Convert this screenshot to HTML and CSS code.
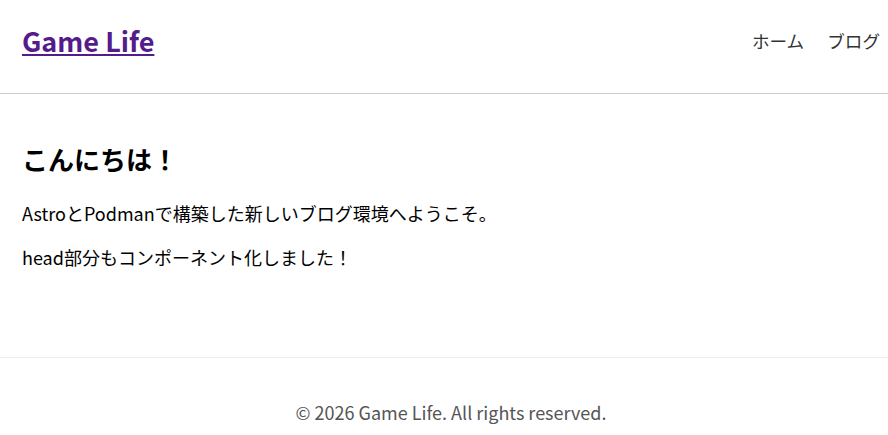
FILE: index.html
```html
<!DOCTYPE html>
<html lang="ja">
<head>
    <meta charset="UTF-8">
    <meta name="viewport" content="width=device-width, initial-scale=1.0">
    <title>Game Life</title>
    <link rel="stylesheet" href="styles.css">
</head>
<body>
<header class="site-header">
    <a class="logo" href="#">Game Life</a>
    <nav class="nav">
        <a href="#">ホーム</a>
        <a href="#">ブログ</a>
    </nav>
</header>

<main class="content">
    <h1>こんにちは！</h1>
    <p>AstroとPodmanで構築した新しいブログ環境へようこそ。</p>
    <p>head部分もコンポーネント化しました！</p>
</main>

<footer class="site-footer">
    <p>&copy; 2026 Game Life. All rights reserved.</p>
</footer>
</body>
</html>
```

FILE: styles.css
```css
body {
    margin: 0;
    font-family: "Noto Sans CJK JP", sans-serif;
    color: #000;
    background: #fff;
}

.site-header {
    display: flex;
    justify-content: space-between;
    align-items: center;
    height: 80px;
    padding: 0 8px 13px 22px;
    border-bottom: 1px solid #ccc;
}

.logo {
    font-size: 27px;
    font-weight: bold;
    color: #551a8b;
}

.nav {
    display: flex;
    gap: 23px;
}

.nav a {
    color: #333;
    text-decoration: none;
    font-size: 17.6px;
}

.content {
    padding: 46px 22px 87px;
}

.content h1 {
    font-size: 26px;
    margin: 0 0 23px;
}

.content p {
    font-size: 18px;
    margin: 0 0 18px;
}

.content p:last-child {
    margin-bottom: 0;
}

.site-footer {
    border-top: 1px solid #eee;
    text-align: center;
    padding: 41px 0 0 14px;
    color: #555;
    font-size: 18px;
}

.site-footer p {
    margin: 0;
}
```
